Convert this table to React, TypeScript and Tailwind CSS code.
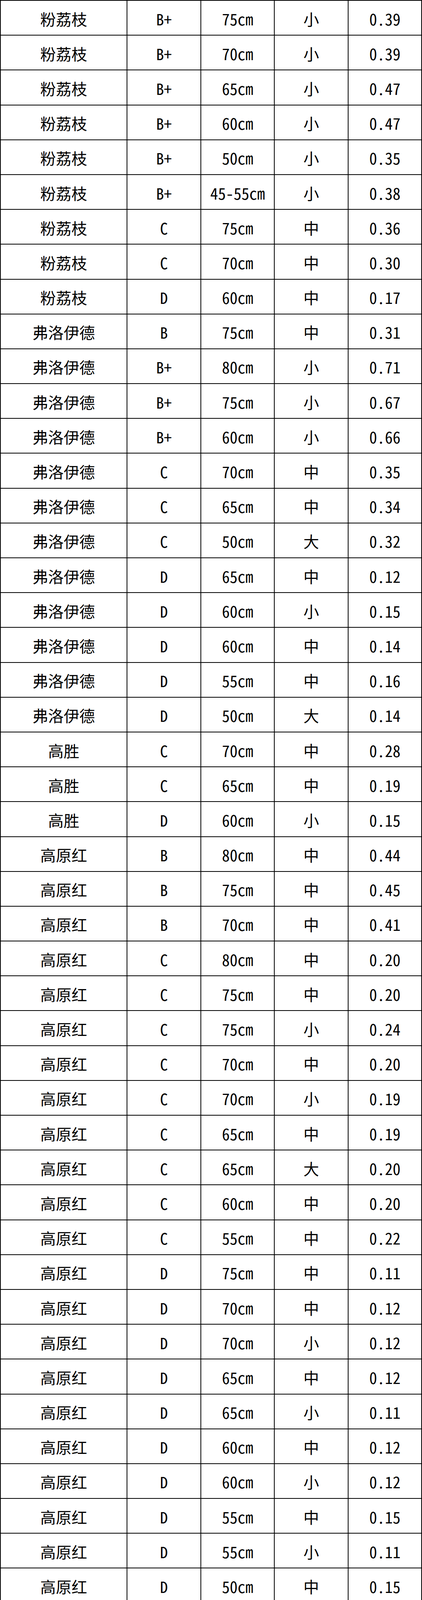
import React from "react";

type Row = [string, string, string, string, string];

const ROWS: Row[] = [
  ["粉荔枝", "B+", "75cm", "小", "0.39"],
  ["粉荔枝", "B+", "70cm", "小", "0.39"],
  ["粉荔枝", "B+", "65cm", "小", "0.47"],
  ["粉荔枝", "B+", "60cm", "小", "0.47"],
  ["粉荔枝", "B+", "50cm", "小", "0.35"],
  ["粉荔枝", "B+", "45-55cm", "小", "0.38"],
  ["粉荔枝", "C", "75cm", "中", "0.36"],
  ["粉荔枝", "C", "70cm", "中", "0.30"],
  ["粉荔枝", "D", "60cm", "中", "0.17"],
  ["弗洛伊德", "B", "75cm", "中", "0.31"],
  ["弗洛伊德", "B+", "80cm", "小", "0.71"],
  ["弗洛伊德", "B+", "75cm", "小", "0.67"],
  ["弗洛伊德", "B+", "60cm", "小", "0.66"],
  ["弗洛伊德", "C", "70cm", "中", "0.35"],
  ["弗洛伊德", "C", "65cm", "中", "0.34"],
  ["弗洛伊德", "C", "50cm", "大", "0.32"],
  ["弗洛伊德", "D", "65cm", "中", "0.12"],
  ["弗洛伊德", "D", "60cm", "小", "0.15"],
  ["弗洛伊德", "D", "60cm", "中", "0.14"],
  ["弗洛伊德", "D", "55cm", "中", "0.16"],
  ["弗洛伊德", "D", "50cm", "大", "0.14"],
  ["高胜", "C", "70cm", "中", "0.28"],
  ["高胜", "C", "65cm", "中", "0.19"],
  ["高胜", "D", "60cm", "小", "0.15"],
  ["高原红", "B", "80cm", "中", "0.44"],
  ["高原红", "B", "75cm", "中", "0.45"],
  ["高原红", "B", "70cm", "中", "0.41"],
  ["高原红", "C", "80cm", "中", "0.20"],
  ["高原红", "C", "75cm", "中", "0.20"],
  ["高原红", "C", "75cm", "小", "0.24"],
  ["高原红", "C", "70cm", "中", "0.20"],
  ["高原红", "C", "70cm", "小", "0.19"],
  ["高原红", "C", "65cm", "中", "0.19"],
  ["高原红", "C", "65cm", "大", "0.20"],
  ["高原红", "C", "60cm", "中", "0.20"],
  ["高原红", "C", "55cm", "中", "0.22"],
  ["高原红", "D", "75cm", "中", "0.11"],
  ["高原红", "D", "70cm", "中", "0.12"],
  ["高原红", "D", "70cm", "小", "0.12"],
  ["高原红", "D", "65cm", "中", "0.12"],
  ["高原红", "D", "65cm", "小", "0.11"],
  ["高原红", "D", "60cm", "中", "0.12"],
  ["高原红", "D", "60cm", "小", "0.12"],
  ["高原红", "D", "55cm", "中", "0.15"],
  ["高原红", "D", "55cm", "小", "0.11"],
  ["高原红", "D", "50cm", "中", "0.15"],
  ["高原红", "D", "50cm", "小", "0.10"],
  ["国王日", "B+", "65-75cm", "中", "0.59"],
  ["海洋之心", "B+", "75cm", "中", "0.74"],
  ["海洋之心", "B+", "65cm", "小", "0.62"],
  ["海洋之心", "B+", "65cm", "中", "0.63"],
  ["海洋之心", "B+", "65-70cm", "中", "0.51"],
  ["红衣美人", "B", "75cm", "中", "0.29"],
  ["红衣美人", "B", "70cm", "中", "0.23"],
  ["红衣美人", "C", "70cm", "中", "0.20"],
  ["红衣美人", "C", "65cm", "中", "0.21"],
  ["红衣美人", "C", "60cm", "小", "0.23"],
  ["红衣美人", "D", "55cm", "中", "0.13"],
  ["皇家探险家", "B", "80cm", "中", "0.22"],
  ["皇家探险家", "B", "75cm", "中", "0.25"],
  ["皇家探险家", "B", "70cm", "中", "0.23"],
  ["皇家探险家", "C", "65cm", "中", "0.20"],
  ["皇家探险家", "C", "60cm", "中", "0.17"],
  ["辉煌", "C", "70cm", "中", "0.25"],
  ["辉煌", "C", "65cm", "中", "0.24"],
  ["辉煌", "D", "60cm", "中", "0.13"],
];

export default function App() {
  return (
    <div
      className="w-[1080px] bg-white text-[40px] leading-none text-black"
      style={{ fontFamily: '"Noto Sans Mono CJK SC", "Noto Sans CJK SC", sans-serif' }}
    >
      <div className="border-t-2 border-l-2 border-black">
        {ROWS.map((r, i) => (
          <div
            key={i}
            className="grid h-[89.2px] grid-cols-[324px_189px_188px_189px_1fr]"
          >
            {r.map((c, j) => (
              <div
                key={j}
                className="flex items-center justify-center border-r-2 border-b-2 border-black pt-[4px] whitespace-pre"
              >
                {c}
              </div>
            ))}
          </div>
        ))}
      </div>
    </div>
  );
}
